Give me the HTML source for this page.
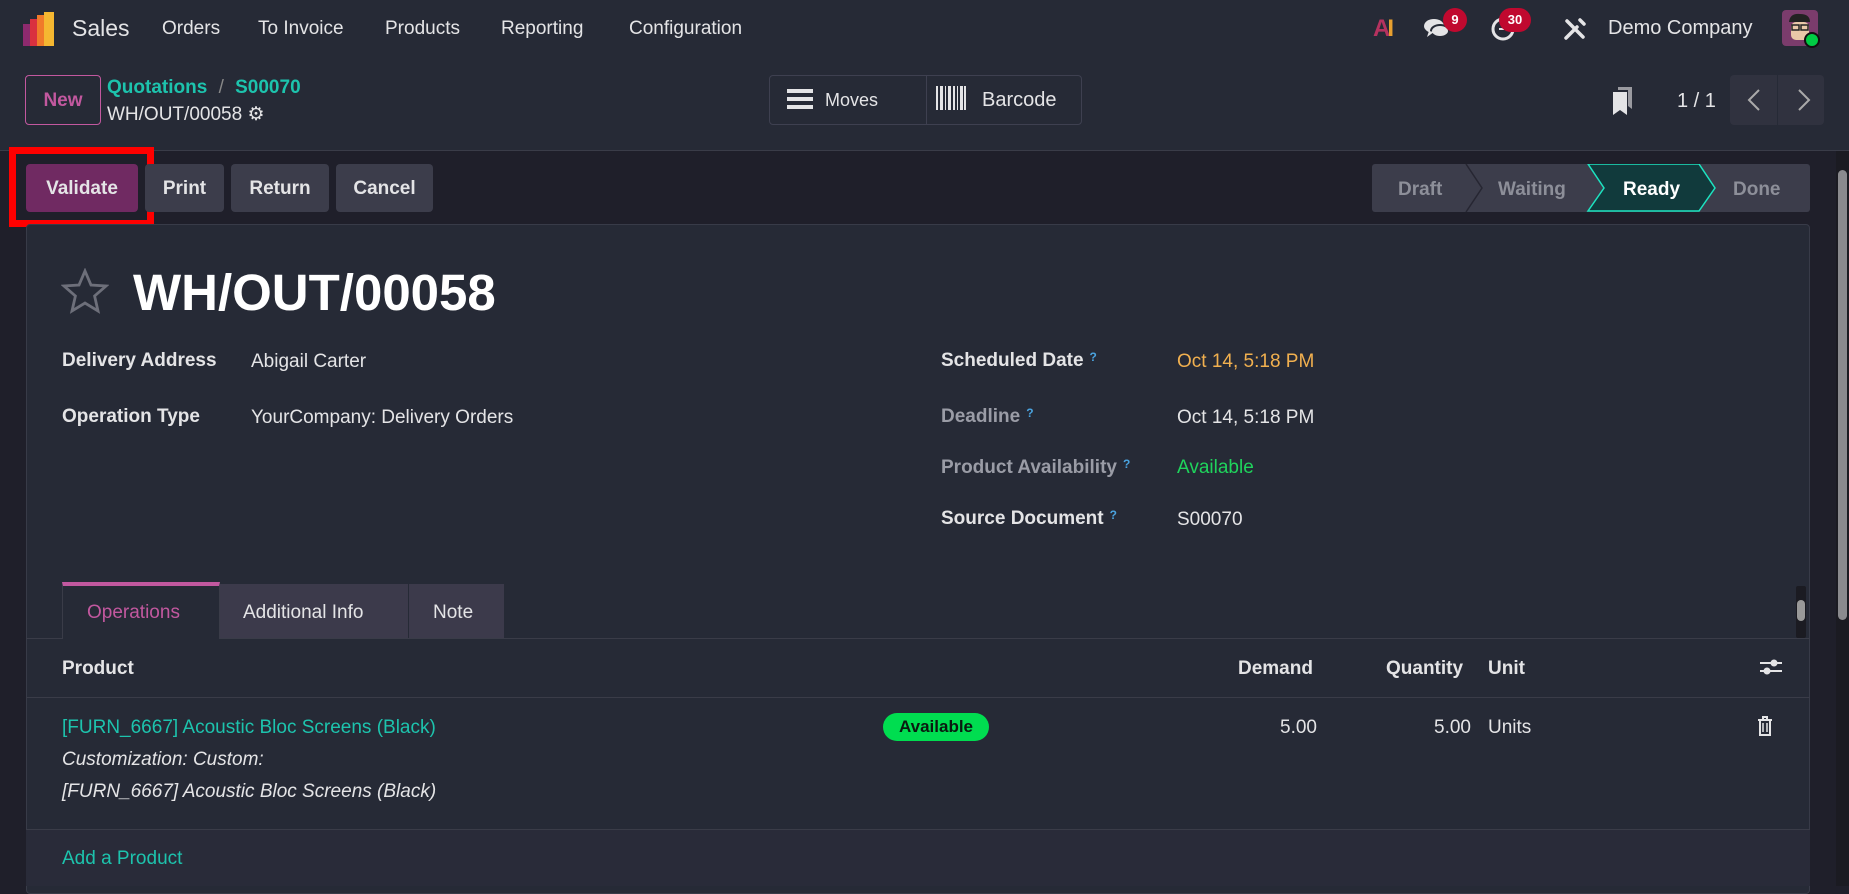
<!DOCTYPE html>
<html><head><meta charset="utf-8"><style>
*{box-sizing:border-box;margin:0;padding:0}
body{width:1849px;height:886px;overflow:hidden;background:#1f1f2a;font-family:"Liberation Sans",sans-serif;color:#e4e4e6;position:relative}
.a{position:absolute;white-space:nowrap}
.nav{left:0;top:0;width:1849px;height:57px;background:#262a36}
.cp{left:0;top:57px;width:1849px;height:94px;background:#262a36;border-bottom:1px solid #3a3c48}
.menu{top:18px;font-size:19px;color:#e4e4e6}
.btn{height:48px;border-radius:4px;background:#3c3d4b;color:#e4e4e6;font-size:19px;font-weight:bold;display:flex;align-items:center;justify-content:center;top:164px;padding-top:2px}
.sheet{left:26px;top:224px;width:1784px;height:670px;background:#262a36;border:1px solid #383b48;border-radius:4px}
.lbl{font-size:19px;font-weight:bold;color:#e4e4e6}
.mut{color:#9a9ca6}
.val{font-size:19px;color:#e4e4e6}
.q{color:#4aa3df;font-size:12px;vertical-align:top;margin-left:6px;font-weight:bold}
.th{font-size:19px;font-weight:bold;top:658px}
.teal{color:#1dc3ad}
</style></head><body>
<div class="a nav"></div>
<svg class="a" style="left:23px;top:12px" width="36" height="34" viewBox="0 0 36 34"><rect x="0" y="12" width="10" height="22" fill="#8e2a6e"/><rect x="7" y="7" width="10" height="27" fill="#d9303f"/><rect x="14" y="3" width="10" height="31" fill="#f07a2a"/><rect x="21" y="0" width="10" height="34" fill="#f5b731"/></svg>
<div class="a" style="left:72px;top:15px;font-size:23px">Sales</div>
<div class="a menu" style="left:162px">Orders</div>
<div class="a menu" style="left:258px">To Invoice</div>
<div class="a menu" style="left:385px">Products</div>
<div class="a menu" style="left:501px">Reporting</div>
<div class="a menu" style="left:629px">Configuration</div>
<div class="a" style="left:1373px;top:15px;font-size:24px;font-weight:bold;color:#e8a02f;letter-spacing:-3px"><span style="color:#b5325f">A</span>I</div>
<svg class="a" style="left:1423px;top:17px" width="28" height="24" viewBox="0 0 28 24"><ellipse cx="11" cy="9" rx="10" ry="7" fill="#e4e4e6"/><ellipse cx="17" cy="14" rx="9" ry="6" fill="#e4e4e6" stroke="#262a36" stroke-width="2"/><path d="M6 14 L4 20 L11 15Z" fill="#e4e4e6"/></svg>
<div class="a" style="left:1443px;top:8px;width:24px;height:24px;border-radius:12px;background:#c0092f;color:#fff;font-size:13px;font-weight:bold;text-align:center;line-height:24px">9</div>
<svg class="a" style="left:1490px;top:16px" width="26" height="26" viewBox="0 0 26 26"><circle cx="13" cy="13" r="10" fill="none" stroke="#e4e4e6" stroke-width="3"/><path d="M13 7 V13 H9" stroke="#e4e4e6" stroke-width="2" fill="none"/></svg>
<div class="a" style="left:1499px;top:8px;width:32px;height:24px;border-radius:12px;background:#c0092f;color:#fff;font-size:13px;font-weight:bold;text-align:center;line-height:24px">30</div>
<svg class="a" style="left:1563px;top:17px" width="24" height="24" viewBox="0 0 24 24"><path d="M3 21 L14 10 M17 3 L21 7 M4 4 L20 20" stroke="#e4e4e6" stroke-width="3.5" stroke-linecap="round"/></svg>
<div class="a" style="left:1608px;top:17px;font-size:20px">Demo Company</div>
<div class="a" style="left:1782px;top:10px;width:36px;height:36px;border-radius:4px;background:#7b3c6c"></div>
<svg class="a" style="left:1786px;top:12px" width="28" height="32" viewBox="0 0 28 32"><path d="M3 10 Q4 1 14 2 Q24 2 24 10 Z" fill="#222"/><rect x="5" y="10" width="18" height="18" rx="5" fill="#e9c8a8"/><rect x="6" y="13" width="7" height="5" fill="none" stroke="#222" stroke-width="1.5"/><rect x="15" y="13" width="7" height="5" fill="none" stroke="#222" stroke-width="1.5"/></svg>
<div class="a" style="left:1804px;top:32px;width:16px;height:16px;border-radius:8px;background:#00cc44;border:2px solid #111"></div>

<div class="a cp"></div>
<div class="a" style="left:25px;top:75px;width:76px;height:50px;border:1px solid #c2589f;border-radius:4px;color:#c2589f;font-size:19px;font-weight:bold;text-align:center;line-height:50px">New</div>
<div class="a" style="left:107px;top:77px;font-size:19px;font-weight:bold"><span class="teal">Quotations</span> <span style="color:#888;font-weight:normal;margin:0 6px">/</span> <span class="teal">S00070</span></div>
<div class="a" style="left:107px;top:103px;font-size:19px">WH/OUT/00058 <span style="font-size:19px">⚙</span></div>
<div class="a" style="left:769px;top:75px;width:313px;height:50px;border:1px solid #3e4050;border-radius:4px"></div>
<div class="a" style="left:926px;top:75px;width:1px;height:50px;background:#3e4050"></div>
<svg class="a" style="left:787px;top:88px" width="26" height="22"><rect y="1" width="26" height="4" fill="#e4e4e6"/><rect y="9" width="26" height="4" fill="#e4e4e6"/><rect y="17" width="26" height="4" fill="#e4e4e6"/></svg>
<div class="a" style="left:825px;top:90px;font-size:18px">Moves</div>
<svg class="a" style="left:936px;top:86px" width="30" height="24"><g fill="#e4e4e6"><rect x="0" width="2" height="24"/><rect x="4" width="3" height="24"/><rect x="9" width="1" height="24"/><rect x="12" width="3" height="24"/><rect x="17" width="2" height="24"/><rect x="21" width="1" height="24"/><rect x="24" width="3" height="24"/><rect x="28" width="2" height="24"/></g></svg>
<div class="a" style="left:982px;top:89px;font-size:20px">Barcode</div>
<svg class="a" style="left:1612px;top:87px" width="22" height="28" viewBox="0 0 22 28"><path d="M6 0 H20 V22 L16 19 V3 H6Z" fill="#9a9aa0"/><path d="M1 5 H15 V28 L8 23 L1 28Z" fill="#e4e4e6"/></svg>
<div class="a" style="left:1677px;top:90px;font-size:20px">1 / 1</div>
<div class="a" style="left:1730px;top:75px;width:94px;height:50px;background:#30323f;border-radius:4px"></div>
<div class="a" style="left:1777px;top:75px;width:1px;height:50px;background:#262a36"></div>
<svg class="a" style="left:1743px;top:88px" width="70" height="24"><path d="M16 2 L6 12 L16 22" stroke="#aaa" stroke-width="2" fill="none"/><path d="M56 2 L66 12 L56 22" stroke="#aaa" stroke-width="2" fill="none"/></svg>

<div class="a" style="left:9px;top:147px;width:145px;height:80px;border:7px solid #ff0000"></div>
<div class="a btn" style="left:26px;width:112px;background:#702a62">Validate</div>
<div class="a btn" style="left:145px;width:79px">Print</div>
<div class="a btn" style="left:231px;width:98px">Return</div>
<div class="a btn" style="left:336px;width:97px">Cancel</div>
<svg class="a" style="left:1372px;top:164px" width="438" height="48" viewBox="0 0 438 48"><rect width="438" height="48" rx="3" fill="#3c3d4b"/><path d="M94 0 L110 24 L94 48" stroke="#262632" stroke-width="1.5" fill="none"/><path d="M216 0 H327 L343 24 L327 47 H216 L232 24 Z" fill="#113a3c" stroke="#1de3c0" stroke-width="1.5"/></svg>
<div class="a" style="left:1398px;top:179px;font-size:19px;font-weight:bold;color:#8d8f99">Draft</div>
<div class="a" style="left:1498px;top:179px;font-size:19px;font-weight:bold;color:#8d8f99">Waiting</div>
<div class="a" style="left:1623px;top:179px;font-size:19px;font-weight:bold;color:#fff">Ready</div>
<div class="a" style="left:1733px;top:179px;font-size:19px;font-weight:bold;color:#8d8f99">Done</div>
<div class="a" style="left:1836px;top:151px;width:13px;height:735px;background:#1b1b22"></div>
<div class="a" style="left:1838px;top:170px;width:9px;height:450px;border-radius:5px;background:#8a8a8e"></div>

<div class="a sheet"></div>
<svg class="a" style="left:61px;top:268px" width="48" height="46" viewBox="0 0 24 23"><path d="M12 1.5 L15 8.5 L22.5 9 L16.8 14 L18.5 21.5 L12 17.5 L5.5 21.5 L7.2 14 L1.5 9 L9 8.5 Z" fill="none" stroke="#6d6f7a" stroke-width="1.4"/></svg>
<div class="a" style="left:133px;top:263px;font-size:51px;font-weight:bold;color:#fff">WH/OUT/00058</div>

<div class="a lbl" style="left:62px;top:350px">Delivery Address</div>
<div class="a val" style="left:251px;top:351px">Abigail Carter</div>
<div class="a lbl" style="left:62px;top:406px">Operation Type</div>
<div class="a val" style="left:251px;top:407px">YourCompany: Delivery Orders</div>

<div class="a lbl" style="left:941px;top:350px">Scheduled Date<span class="q">?</span></div>
<div class="a val" style="left:1177px;top:351px;color:#f1b04f">Oct 14, 5:18 PM</div>
<div class="a lbl mut" style="left:941px;top:406px">Deadline<span class="q">?</span></div>
<div class="a val" style="left:1177px;top:407px">Oct 14, 5:18 PM</div>
<div class="a lbl mut" style="left:941px;top:457px">Product Availability<span class="q">?</span></div>
<div class="a val" style="left:1177px;top:457px;color:#1fd35c">Available</div>
<div class="a lbl" style="left:941px;top:508px">Source Document<span class="q">?</span></div>
<div class="a val" style="left:1177px;top:509px">S00070</div>

<div class="a" style="left:26px;top:638px;width:1784px;height:1px;background:#3a3c48"></div>
<div class="a" style="left:62px;top:582px;width:158px;height:57px;background:#262a36;border-top:4px solid #c2589f;border-left:1px solid #3a3c48;border-right:1px solid #3a3c48"></div>
<div class="a" style="left:220px;top:584px;width:188px;height:54px;background:#3c3a4b"></div>
<div class="a" style="left:409px;top:584px;width:95px;height:54px;background:#3c3a4b"></div>
<div class="a" style="left:87px;top:602px;font-size:19px;color:#c2589f">Operations</div>
<div class="a" style="left:243px;top:602px;font-size:19px">Additional Info</div>
<div class="a" style="left:433px;top:602px;font-size:19px">Note</div>
<div class="a" style="left:1796px;top:586px;width:10px;height:52px;background:#1b1b22;border-radius:2px"></div>
<div class="a" style="left:1797px;top:600px;width:8px;height:21px;background:#999;border-radius:4px"></div>

<div class="th a" style="left:62px">Product</div>
<div class="th a" style="left:1238px">Demand</div>
<div class="th a" style="left:1386px">Quantity</div>
<div class="th a" style="left:1488px">Unit</div>
<svg class="a" style="left:1760px;top:656px" width="22" height="22"><path d="M0 7 H22 M0 15 H22" stroke="#e4e4e6" stroke-width="2"/><circle cx="14" cy="7" r="3.5" fill="#e4e4e6"/><circle cx="7" cy="15" r="3.5" fill="#e4e4e6"/></svg>
<div class="a" style="left:26px;top:697px;width:1784px;height:1px;background:#3a3c48"></div>
<div class="a teal" style="left:62px;top:717px;font-size:19px">[FURN_6667] Acoustic Bloc Screens (Black)</div>
<div class="a" style="left:62px;top:749px;font-size:19px;font-style:italic">Customization: Custom:</div>
<div class="a" style="left:62px;top:781px;font-size:19px;font-style:italic">[FURN_6667] Acoustic Bloc Screens (Black)</div>
<div class="a" style="left:883px;top:713px;width:106px;height:28px;border-radius:14px;background:#00dd50;color:#0a1a10;font-size:17px;font-weight:bold;text-align:center;line-height:28px">Available</div>
<div class="a" style="left:1280px;top:717px;font-size:19px">5.00</div>
<div class="a" style="left:1434px;top:717px;font-size:19px">5.00</div>
<div class="a" style="left:1488px;top:717px;font-size:19px">Units</div>
<svg class="a" style="left:1757px;top:716px" width="16" height="20" viewBox="0 0 16 20"><path d="M1 4 H15 M6 4 V1 H10 V4 M3 4 V19 H13 V4" stroke="#e4e4e6" stroke-width="2" fill="none"/><path d="M6 7 V16 M10 7 V16" stroke="#e4e4e6" stroke-width="1.5"/></svg>
<div class="a" style="left:26px;top:829px;width:1784px;height:1px;background:#3a3c48"></div>
<div class="a" style="left:26px;top:830px;width:1784px;height:56px;background:#292b39"></div>
<div class="a teal" style="left:62px;top:848px;font-size:19px">Add a Product</div>
</body></html>
